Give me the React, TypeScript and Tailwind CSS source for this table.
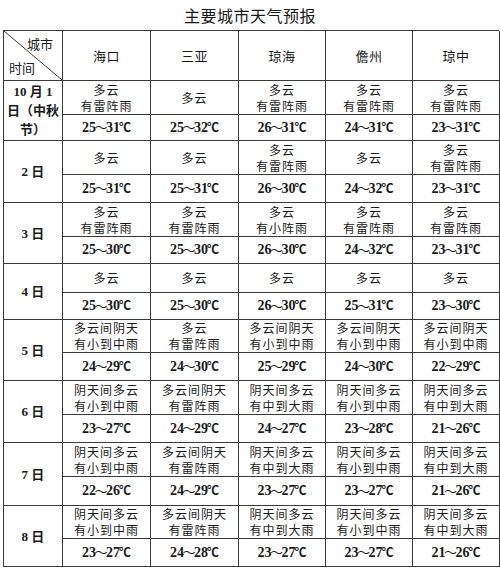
import React from "react";

type Cell = { d: string[]; t: string };
type Row = { day: React.ReactNode; dh: number; th: number; cells: Cell[] };

const c = (d: string, t: string): Cell => ({ d: d.split("|"), t });

const rows: Row[] = [
  {
    day: (
      <>
        <div>10 月 1</div>
        <div>日（中秋</div>
        <div>节）</div>
      </>
    ),
    dh: 34,
    th: 26,
    cells: [
      c("多云|有雷阵雨", "25～31℃"),
      c("多云", "25～32℃"),
      c("多云|有雷阵雨", "26～31℃"),
      c("多云|有雷阵雨", "24～31℃"),
      c("多云|有雷阵雨", "23～31℃"),
    ],
  },
  {
    day: "2 日",
    dh: 34,
    th: 28,
    cells: [
      c("多云", "25～31℃"),
      c("多云", "25～31℃"),
      c("多云|有雷阵雨", "26～30℃"),
      c("多云", "24～32℃"),
      c("多云|有雷阵雨", "23～31℃"),
    ],
  },
  {
    day: "3 日",
    dh: 34,
    th: 27,
    cells: [
      c("多云|有雷阵雨", "25～30℃"),
      c("多云|有雷阵雨", "25～30℃"),
      c("多云|有小阵雨", "26～30℃"),
      c("多云|有雷阵雨", "24～32℃"),
      c("多云|有雷阵雨", "23～31℃"),
    ],
  },
  {
    day: "4 日",
    dh: 29,
    th: 27,
    cells: [
      c("多云", "25～30℃"),
      c("多云", "25～30℃"),
      c("多云", "26～30℃"),
      c("多云", "25～31℃"),
      c("多云", "23～30℃"),
    ],
  },
  {
    day: "5 日",
    dh: 33,
    th: 28,
    cells: [
      c("多云间阴天|有小到中雨", "24～29℃"),
      c("多云|有雷阵雨", "24～30℃"),
      c("多云间阴天|有小到中雨", "25～29℃"),
      c("多云间阴天|有小到中雨", "24～30℃"),
      c("多云间阴天|有小到中雨", "22～29℃"),
    ],
  },
  {
    day: "6 日",
    dh: 34,
    th: 28,
    cells: [
      c("阴天间多云|有小到中雨", "23～27℃"),
      c("多云间阴天|有雷阵雨", "24～29℃"),
      c("阴天间多云|有中到大雨", "24～27℃"),
      c("阴天间多云|有小到中雨", "23～28℃"),
      c("阴天间多云|有中到大雨", "21～26℃"),
    ],
  },
  {
    day: "7 日",
    dh: 34,
    th: 29,
    cells: [
      c("阴天间多云|有小到中雨", "22～26℃"),
      c("多云间阴天|有雷阵雨", "24～29℃"),
      c("阴天间多云|有中到大雨", "23～27℃"),
      c("阴天间多云|有小到中雨", "23～27℃"),
      c("阴天间多云|有中到大雨", "21～26℃"),
    ],
  },
  {
    day: "8 日",
    dh: 33,
    th: 28,
    cells: [
      c("阴天间多云|有小到中雨", "23～27℃"),
      c("多云间阴天|有雷阵雨", "24～28℃"),
      c("阴天间多云|有中到大雨", "23～27℃"),
      c("阴天间多云|有小到中雨", "23～27℃"),
      c("阴天间多云|有中到大雨", "21～26℃"),
    ],
  },
];

const cities = ["海口", "三亚", "琼海", "儋州", "琼中"];
const widths = ["w-[88px]", "w-[88px]", "w-[87px]", "w-[87px]", "w-[87px]"];

const sans = "font-['Noto_Sans_CJK_SC',sans-serif]";
const serif = "font-['Liberation_Serif','Noto_Sans_CJK_SC',serif]";
const line = "border-[#3a3a3a]";

function Temp({ t }: { t: string }) {
  const [a, rest] = t.split("～");
  const b = rest.replace("℃", "");
  return (
    <span className="inline-flex items-center">
      <span className="text-[14px]">{a}</span>
      <span className="mx-[-1.5px] text-[13px] font-normal">～</span>
      <span className="text-[14px]">{b}</span>
      <span className="ml-[-1px] text-[12px]">℃</span>
    </span>
  );
}

export default function App() {
  return (
    <div className="w-[500px] h-[569px] bg-white text-[#1a1a1a] overflow-hidden">
      <div className={`h-[30px] flex items-center justify-center text-[16px] leading-none tracking-[0.5px] ${sans}`}>
        主要城市天气预报
      </div>
      <div className={`ml-[3px] w-[496px] border-l border-t ${line}`}>
        <div className="flex h-[50px]">
          <div className={`relative w-[59px] shrink-0 border-r border-b ${line}`}>
            <svg className="absolute inset-0 w-full h-full" viewBox="0 0 58 49" preserveAspectRatio="none">
              <line x1="0" y1="0" x2="58" y2="49" stroke="#3a3a3a" strokeWidth="1" />
            </svg>
            <div className={`relative h-full text-[13px] leading-none ${sans}`}>
              <div className="absolute right-[9px] top-[6px]">城市</div>
              <div className="absolute left-[5px] bottom-[6px]">时间</div>
            </div>
          </div>
          {cities.map((n, i) => (
            <div
              key={n}
              className={`${widths[i]} shrink-0 flex items-center justify-center border-r border-b ${line} text-[13px] tracking-[0.5px] ${sans}`}
            >
              {n}
            </div>
          ))}
        </div>
        {rows.map((r, ri) => (
          <div key={ri} className="flex">
            <div
              className={`w-[59px] shrink-0 flex flex-col items-center justify-center border-r border-b ${line} font-bold text-[13px] leading-[19px] ${serif}`}
            >
              {r.day}
            </div>
            <div className="flex flex-col">
              <div className="flex" style={{ height: r.dh }}>
                {r.cells.map((cell, ci) => (
                  <div
                    key={ci}
                    className={`${widths[ci]} shrink-0 flex flex-col items-center justify-center border-r border-b ${line} text-[12px] leading-[16px] tracking-[1px] ${sans}`}
                  >
                    {cell.d.map((l, li) => (
                      <div key={li}>{l}</div>
                    ))}
                  </div>
                ))}
              </div>
              <div className="flex" style={{ height: r.th }}>
                {r.cells.map((cell, ci) => (
                  <div
                    key={ci}
                    className={`${widths[ci]} shrink-0 flex items-center justify-center border-r border-b ${line} font-bold leading-none ${serif}`}
                  >
                    <Temp t={cell.t} />
                  </div>
                ))}
              </div>
            </div>
          </div>
        ))}
      </div>
    </div>
  );
}
